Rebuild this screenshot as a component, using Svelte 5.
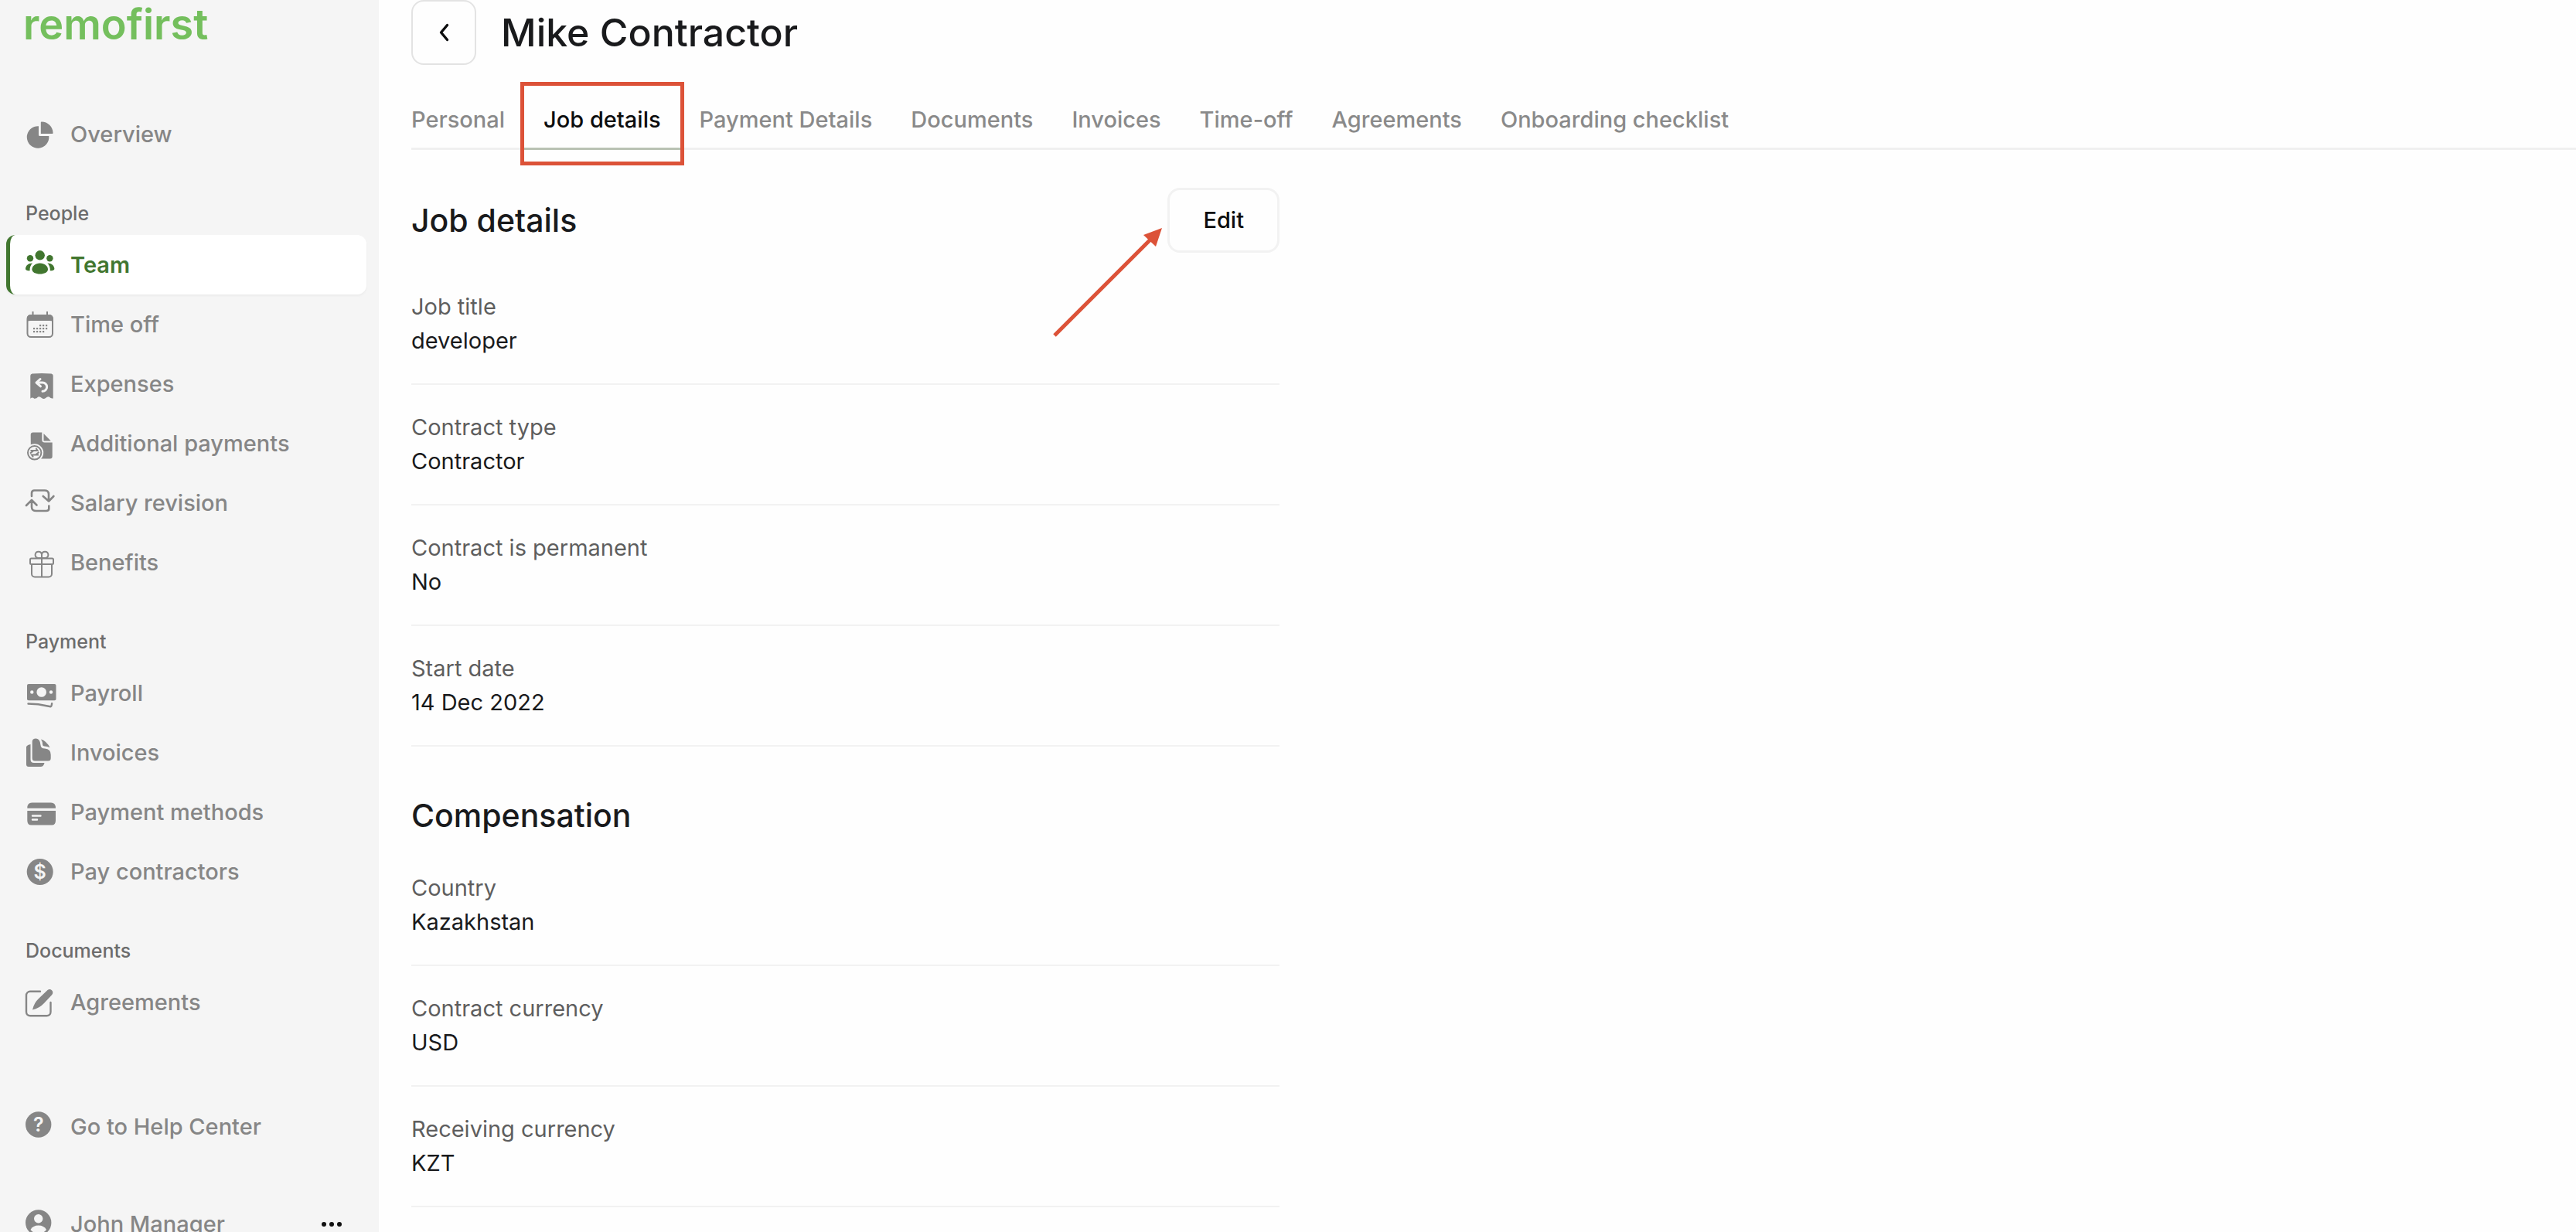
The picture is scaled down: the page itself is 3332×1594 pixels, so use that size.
<script lang="ts">
	interface NavItem {
		label: string;
		icon: string;
		active?: boolean;
	}
	interface NavGroup {
		title?: string;
		items: NavItem[];
	}

	const groups: NavGroup[] = [
		{ items: [{ label: 'Overview', icon: 'pie' }] },
		{
			title: 'People',
			items: [
				{ label: 'Team', icon: 'team', active: true },
				{ label: 'Time off', icon: 'calendar' },
				{ label: 'Expenses', icon: 'receipt' },
				{ label: 'Additional payments', icon: 'docSync' },
				{ label: 'Salary revision', icon: 'cycle' },
				{ label: 'Benefits', icon: 'gift' }
			]
		},
		{
			title: 'Payment',
			items: [
				{ label: 'Payroll', icon: 'cash' },
				{ label: 'Invoices', icon: 'files' },
				{ label: 'Payment methods', icon: 'card' },
				{ label: 'Pay contractors', icon: 'dollar' }
			]
		},
		{ title: 'Documents', items: [{ label: 'Agreements', icon: 'edit' }] }
	];

	const tabs = [
		'Personal',
		'Job details',
		'Payment Details',
		'Documents',
		'Invoices',
		'Time-off',
		'Agreements',
		'Onboarding checklist'
	];
	let activeTab = $state('Job details');

	const jobDetails = [
		['Job title', 'developer'],
		['Contract type', 'Contractor'],
		['Contract is permanent', 'No'],
		['Start date', '14 Dec 2022']
	];
	const compensation = [
		['Country', 'Kazakhstan'],
		['Contract currency', 'USD'],
		['Receiving currency', 'KZT']
	];

	// Calendar dots as [x, y] pairs.
	const dots = [
		[22, 23], [26, 23], [30, 23],
		[14, 27], [18, 27], [22, 27], [26, 27], [30, 27],
		[14, 31], [18, 31], [22, 31], [26, 31]
	];
</script>

{#snippet icon(name: string)}
	<svg class="icon" viewBox="0 0 44 44" aria-hidden="true">
		{#if name === 'pie'}
			<path fill="currentColor" d="M20 11.2V22.500a1.500 1.500 0 0 0 1.500 1.500H33.300A14.300 14.300 0 1 1 20 11.200Z" />
			<path fill="currentColor" d="M22.800 6.500a1 1 0 0 1 1-1A15 15 0 0 1 38.600 20a1 1 0 0 1-1 1H22.800Z" />
		{:else if name === 'team'}
			<g fill="currentColor">
				<circle cx="21.700" cy="9.300" r="6.200" />
				<circle cx="9" cy="13.200" r="4.200" />
				<circle cx="34.400" cy="13.200" r="4.200" />
				<path d="M21.700 19.500c6 0 10.300 4 10.300 8 0 3.800-4.600 6-10.300 6s-10.300-2.200-10.300-6c0-4 4.300-8 10.300-8Z" />
				<path d="M12 19.500c-5.500 0-9 3.500-9 7.500 0 1.600 2.400 2.300 5.600 2.300C8.300 25.600 9.500 22 12 19.500Z" />
				<path d="M31.400 19.500c5.500 0 9 3.500 9 7.500 0 1.600-2.400 2.300-5.600 2.300.3-3.700-.9-7.300-3.400-9.800Z" />
			</g>
		{:else if name === 'calendar'}
			<rect x="5.500" y="10" width="32.500" height="28" rx="4.500" fill="none" stroke="currentColor" stroke-width="2" />
			<path fill="currentColor" d="M5 18v-4.500A4.500 4.500 0 0 1 9.500 9H34a4.500 4.500 0 0 1 4.500 4.500V18Q37 17 34 17H10q-4 0-5 1Z" />
			<path stroke="currentColor" stroke-width="2" d="M12.500 5v6M31 5v6" />
			{#each dots as [x, y]}
				<rect x={x - 1} y={y - 1} width="2.200" height="2.200" fill="currentColor" />
			{/each}
		{:else if name === 'receipt'}
			<path fill="currentColor" d="M9.300 11q0-2 2.200-2.500 12.500-1.200 25 0 2.200.500 2.200 2.500v29.500q-3 .5-5-2-2.400-1-4.600 1.500-2.700 1.800-5.100 0-2.500-2.500-4.800-1.500-1.900 2.500-4.900 2.300-2.500-2.600-5 0Z" />
			<path fill="none" stroke="#f5f5f5" stroke-width="3" stroke-linecap="round" stroke-linejoin="round" d="M22 15.500 17 20l5.500 4.800M17.500 20H25a5.600 5.600 0 0 1 0 11.300" />
		{:else if name === 'docSync'}
			<path fill="currentColor" d="M9.700 10.500a3 3 0 0 1 3-3h11.600V17a3.500 3.500 0 0 0 3.500 3.500h9.900v18a3 3 0 0 1-3 3H10Z" />
			<path fill="currentColor" d="m26.500 9 9.300 9.500h-9.300Z" />
			<circle cx="14.700" cy="33.800" r="11.500" fill="#f5f5f5" />
			<circle cx="14.700" cy="33.800" r="8.700" fill="none" stroke="currentColor" stroke-width="2" />
			<path fill="none" stroke="currentColor" stroke-width="2" d="M9.500 31h9l-2-3M20 36.500h-9l2 3M9 34.500l4-3M20.500 33l-4 3" />
		{:else if name === 'cycle'}
			<path fill="none" stroke="currentColor" stroke-width="2.600" stroke-linecap="round" stroke-linejoin="round" d="M11 13V9q0-3.500 3.500-3.500h12q6.500-.5 6.500 5V19M25.700 13l7.400 6.500 6.300-6.500M33.300 25.500V29q0 3-3.500 3h-12q-6.800.5-6.800-5v-8.500M4 25l7-7 6.500 6.500" />
		{:else if name === 'gift'}
			<g fill="none" stroke="currentColor" stroke-width="2">
				<rect x="9" y="16.500" width="30" height="7.500" rx="1.500" />
				<path d="M11 24v12.500a4 4 0 0 0 4 4h18a4 4 0 0 0 4-4V24M24 16v24.500M24 16h-5a4.200 4.200 0 1 1 5-4.500V16ZM24 16h5a4.200 4.200 0 1 0-5-4.500" />
			</g>
		{:else if name === 'cash'}
			<rect x="5" y="10" width="37.500" height="21.300" rx="2" fill="currentColor" />
			<g fill="#f5f5f5">
				<circle cx="23.700" cy="20.500" r="6.300" />
				<circle cx="11.300" cy="20.500" r="2.200" />
				<circle cx="36" cy="20.500" r="2.200" />
			</g>
			<path fill="none" stroke="currentColor" stroke-width="2.400" stroke-linecap="round" stroke-linejoin="round" d="m6.500 35.500 13 .7 16 3q1.300 0 1.600-4" />
		{:else if name === 'files'}
			<path fill="currentColor" d="M4 14q1.500-2.500 5.500-3v19.500q0 4.500 4.500 4.500h13.500q-1 5-5 5H7q-3 0-3-3Z" />
			<path fill="currentColor" d="M11.700 7.500q0-4 5-4 5.300.5 5.800 8.500.3 4.500 5.500 4.500 7.700.5 7.700 8v4.500q0 3.500-3.500 3.500H15q-3.300 0-3.300-3.500Z" />
			<path fill="currentColor" d="M23 4.500q7.500 2.500 11.500 10.800-3-1.800-7-1.800-2.500 0-2.500-3Q25 7.500 23 4.500Z" />
		{:else if name === 'card'}
			<path fill="currentColor" d="M5.300 16.700q0-7.200 6-7.200H36q6 0 6 7.200ZM5.300 20H42v12.500q0 6-5 6H10.300q-5 0-5-6Z" />
			<path stroke="#f5f5f5" stroke-width="2.400" stroke-linecap="round" d="M12 26.500h10.500M12 31.500h6" />
		{:else if name === 'dollar'}
			<circle cx="21.700" cy="22" r="17" fill="currentColor" />
			<text class="glyph" x="21.700" y="31" text-anchor="middle">$</text>
		{:else if name === 'edit'}
			<path fill="none" stroke="currentColor" stroke-width="2.400" stroke-linecap="round" d="M22 7.800H9a5 5 0 0 0-5 5v21.500a5 5 0 0 0 5 5h21.500a5 5 0 0 0 5-5V22" />
			<path fill="currentColor" d="M12 31.500q2-9 8-14.500L31.500 6q3-2 5.500.300 2.500 2.700.3 5.700L27 23q-6 6.500-15 8.500Z" />
		{:else if name === 'help'}
			<circle cx="19.700" cy="19" r="16.700" fill="currentColor" />
			<text class="glyph" x="19.700" y="28" text-anchor="middle">?</text>
		{:else if name === 'user'}
			<circle cx="19.700" cy="20" r="16.700" fill="currentColor" />
			<circle cx="19.700" cy="14.800" r="5.700" fill="#f5f5f5" />
			<path fill="#f5f5f5" d="M9.500 29q3-5.500 10.200-5.500T30 29q-4 5-10.300 5T9.500 29Z" />
		{/if}
	</svg>
{/snippet}

{#snippet fields(rows: string[][])}
	<dl>
		{#each rows as [term, value] (term)}
			<div class="field">
				<dt>{term}</dt>
				<dd>{value}</dd>
			</div>
		{/each}
	</dl>
{/snippet}

<div class="shell">
	<aside class="sidebar">
		<a class="logo" href="#home">remofirst</a>
		<nav>
			{#each groups as group}
				{#if group.title}
					<h3 class="group-title">{group.title}</h3>
				{/if}
				{#each group.items as item (item.label)}
					<a class="item" class:active={item.active} href="#{item.icon}">
						{@render icon(item.icon)}
						<span>{item.label}</span>
					</a>
				{/each}
			{/each}
		</nav>
		<a class="item help" href="#help">
			{@render icon('help')}
			<span>Go to Help Center</span>
		</a>
		<div class="item user">
			{@render icon('user')}
			<span>John Manager</span>
			<button class="more" aria-label="Account menu"><i></i><i></i><i></i></button>
		</div>
	</aside>

	<main>
		<header class="page-head">
			<button class="back" aria-label="Back">
				<svg viewBox="0 0 24 24" aria-hidden="true">
					<path d="m16.500 2.500-8 9.500 8 9.500" fill="none" stroke="#0c0d0e" stroke-width="3.400" stroke-linecap="round" stroke-linejoin="round" />
				</svg>
			</button>
			<h1>Mike Contractor</h1>
		</header>

		<div class="tabs" role="tablist">
			{#each tabs as tab (tab)}
				<button
					class="tab"
					class:selected={tab === activeTab}
					role="tab"
					aria-selected={tab === activeTab}
					onclick={() => (activeTab = tab)}
				>
					{tab}
				</button>
			{/each}
		</div>

		<div class="details">
			<section>
				<div class="section-head">
					<h2>Job details</h2>
					<div class="edit-wrap">
						<svg class="arrow" viewBox="0 0 144 144" aria-hidden="true">
							<path d="M2 141 130 13" stroke="#dc5238" stroke-width="5" />
							<path d="m141 2-24 9 16 15Z" fill="#dc5238" />
						</svg>
						<button class="edit">Edit</button>
					</div>
				</div>
				{@render fields(jobDetails)}
			</section>
			<section>
				<div class="section-head">
					<h2>Compensation</h2>
				</div>
				{@render fields(compensation)}
			</section>
		</div>
	</main>
</div>

<style>
	:global(body) {
		margin: 0;
		background: #fefefe;
	}
	.shell {
		display: flex;
		height: 100vh;
		overflow: hidden;
		font-family: Inter, 'Liberation Sans', sans-serif;
		font-size: 29px;
		line-height: 44px;
		font-optical-sizing: none;
		color: #191a1c;
	}
	button {
		font: inherit;
		color: inherit;
		background: none;
		border: 0;
		padding: 0;
		cursor: pointer;
	}
	a {
		color: inherit;
		text-decoration: none;
	}

	/* Sidebar */
	.sidebar {
		flex: none;
		box-sizing: border-box;
		width: 490px;
		padding: 0 16px 0 8px;
		background: #f5f5f5;
	}
	.logo {
		display: block;
		height: 135px;
		padding-left: 22px;
		font-size: 54px;
		font-weight: 600;
		line-height: 64px;
		box-sizing: border-box;
		color: #74bf5d;
	}
	.group-title {
		margin: 0;
		padding: 48px 0 12px 25px;
		font-size: 25px;
		font-weight: 500;
		line-height: 32px;
		color: #6c6c6c;
	}
	.item {
		display: flex;
		align-items: center;
		gap: 17px;
		box-sizing: border-box;
		height: 77px;
		padding-left: 17px;
		border-left: 5px solid transparent;
		border-radius: 12px;
		font-weight: 500;
		color: #868686;
	}
	.item.active {
		background: #fff;
		border-left-color: #41762f;
		box-shadow: 0 2px 3px rgba(0, 0, 0, 0.04);
		font-weight: 600;
		color: #41762f;
	}
	.icon {
		flex: none;
		width: 44px;
		height: 44px;
	}
	.glyph {
		font-size: 25px;
		font-weight: 600;
		fill: #f5f5f5;
	}
	.help {
		margin-top: 84px;
	}
	.user {
		margin-top: 49px;
		padding-right: 32px;
	}
	.more {
		display: flex;
		gap: 4px;
		margin-left: auto;
	}
	.more i {
		width: 6px;
		height: 6px;
		border-radius: 50%;
		background: #111;
	}

	/* Page */
	main {
		flex: 1;
		min-width: 0;
		padding-left: 42px;
	}
	.page-head {
		display: flex;
		align-items: center;
		gap: 32px;
	}
	.back {
		box-sizing: border-box;
		width: 84px;
		height: 84px;
		border: 2px solid #e3e3e3;
		border-radius: 16px;
		display: grid;
		place-items: center;
	}
	.back svg {
		width: 24px;
		height: 24px;
	}
	h1 {
		margin: 0;
		font-size: 50px;
		font-weight: 500;
		line-height: 60px;
		font-optical-sizing: auto;
	}
	.tabs {
		display: flex;
		margin-top: 26px;
		border-bottom: 3px solid #f0f0f0;
	}
	.tab {
		position: relative;
		padding: 23px 25px 14px;
		font-weight: 500;
		white-space: nowrap;
		color: #8a8a8a;
		border-bottom: 3px solid transparent;
		margin-bottom: -3px;
	}
	.tab:first-child {
		padding-left: 0;
	}
	.tab.selected {
		color: #0c0d0e;
		border-bottom-color: #b9c2b3;
	}
	/* Highlight frame drawn over the selected tab. */
	.tab.selected::after {
		content: '';
		position: absolute;
		inset: -4px -5px -23px;
		border: 5px solid #dc5238;
	}

	.details {
		max-width: 1123px;
	}
	.section-head {
		display: flex;
		align-items: center;
		justify-content: space-between;
		margin: 49px 0 48px;
	}
	section + section .section-head {
		margin-top: 65px;
	}
	h2 {
		margin: 0;
		font-size: 41px;
		font-weight: 500;
		line-height: 48px;
		font-optical-sizing: auto;
	}
	.edit-wrap {
		position: relative;
	}
	.edit {
		display: block;
		box-sizing: border-box;
		height: 84px;
		padding: 0 43px;
		border: 3px solid #f2f2f2;
		border-radius: 16px;
		font-weight: 500;
		color: #0c0d0e;
	}
	.arrow {
		position: absolute;
		top: 50px;
		right: 149px;
		width: 144px;
		height: 144px;
	}
	dl {
		margin: 0;
	}
	.field {
		padding-bottom: 33px;
		border-bottom: 2px solid #f2f2f2;
	}
	.field + .field {
		padding-top: 33px;
	}
	dt {
		color: #5e5e5e;
	}
	dd {
		margin: 0;
	}
</style>
